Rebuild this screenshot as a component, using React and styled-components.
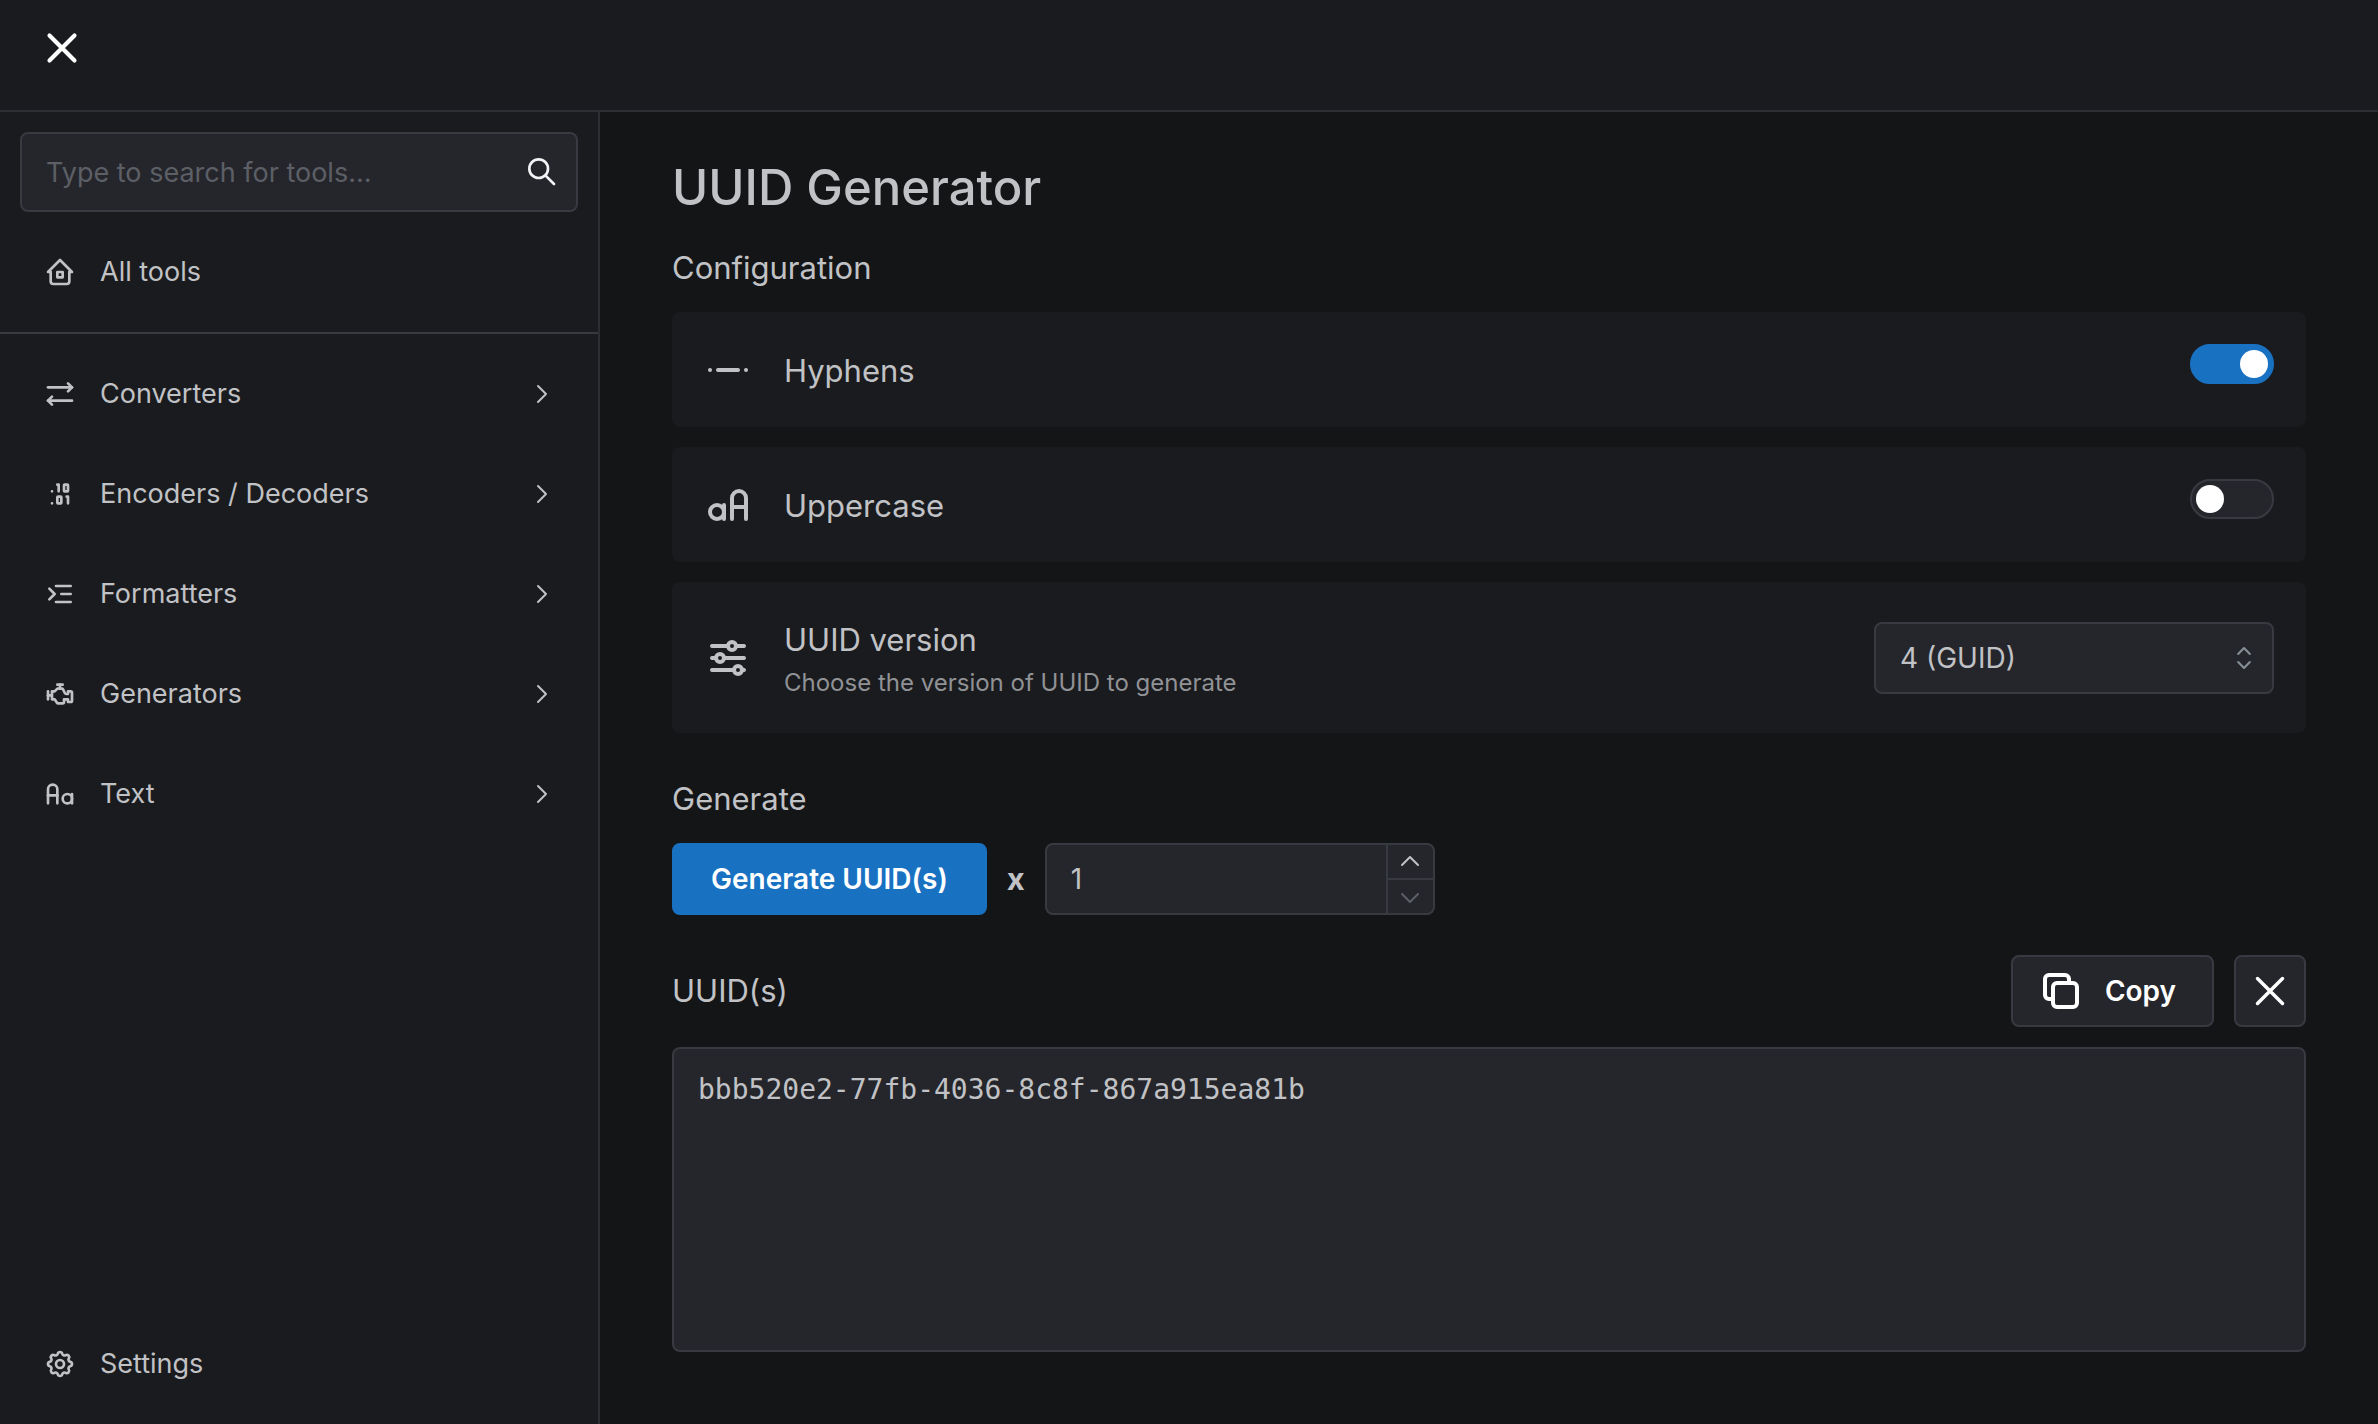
import React, { useState } from "react";
import styled, { createGlobalStyle } from "styled-components";
import {
  TbHome2,
  TbArrowsRightLeft,
  TbBinary,
  TbIndentIncrease,
  TbEngine,
  TbLetterCase,
  TbLetterCaseToggle,
  TbSettings,
  TbAdjustmentsHorizontal,
} from "react-icons/tb";

const color = {
  page: "#141517",
  panel: "#1a1b1e",
  field: "#25262b",
  line: "#2c2e33",
  border: "#373a40",
  text: "#c1c2c5",
  dimmed: "#909296",
  muted: "#5c5f66",
  blue: "#1971c2",
};

const GlobalStyle = createGlobalStyle`
  *, *::before, *::after { box-sizing: border-box; }
  body {
    margin: 0;
    background: ${color.page};
    color: ${color.text};
    font-family: Inter, Roboto, "Liberation Sans", sans-serif;
    font-size: 28px;
    line-height: 44px;
  }
  button, input, select, textarea { font: inherit; color: inherit; }
`;

const Shell = styled.div`
  min-height: 100vh;
  display: flex;
  flex-direction: column;
`;

const Header = styled.header`
  height: 112px;
  padding: 20px 34px;
  background: ${color.panel};
  border-bottom: 2px solid ${color.line};
`;

const BurgerButton = styled.button`
  display: grid;
  place-items: center;
  width: 56px;
  height: 56px;
  padding: 0;
  border: 0;
  background: none;
  color: #fff;
`;

const Body = styled.div`
  flex: 1;
  display: flex;
`;

const Sidebar = styled.nav`
  flex: none;
  display: flex;
  flex-direction: column;
  width: 600px;
  background: ${color.panel};
  border-right: 2px solid ${color.line};
  font-size: 27px;
`;

const SearchBox = styled.label`
  display: flex;
  align-items: center;
  height: 80px;
  margin: 20px 20px 10px;
  padding: 0 18px 0 24px;
  background: ${color.field};
  border: 2px solid ${color.border};
  border-radius: 8px;
  color: #f1f3f5;
`;

const SearchInput = styled.input`
  flex: 1;
  min-width: 0;
  padding: 2px 0 0;
  border: 0;
  outline: 0;
  background: none;
  &::placeholder { color: ${color.muted}; opacity: 1; }
`;

const NavLink = styled.a`
  display: flex;
  align-items: center;
  gap: 24px;
  height: 100px;
  padding: 0 44px;
  color: ${color.text};
  text-decoration: none;
`;

const NavLabel = styled.span`
  flex: 1;
`;

const TopGroup = styled.div`
  padding-bottom: 10px;
  border-bottom: 2px solid ${color.border};
`;

const NavGroup = styled.div`
  flex: 1;
  padding-top: 10px;
`;

const BottomGroup = styled.div`
  padding-bottom: 10px;
`;

const Main = styled.main`
  flex: 1;
  min-width: 0;
  padding: 40px 72px;
`;

const Title = styled.h1`
  margin: 0 0 20px;
  font-size: 49px;
  line-height: 72px;
  font-weight: 500;
`;

const Heading = styled.h2`
  margin: 0;
  font-size: 31px;
  line-height: 48px;
  font-weight: 400;
`;

const Cards = styled.div`
  display: flex;
  flex-direction: column;
  gap: 20px;
  margin: 20px 0 42px;
`;

const Card = styled.div`
  display: flex;
  align-items: center;
  gap: 32px;
  height: ${(p) => (p.$tall ? "151px" : "115px")};
  padding: 0 32px;
  border-radius: 8px;
  background: ${color.panel};
`;

const CardText = styled.div`
  flex: 1;
  display: flex;
  flex-direction: column;
  padding-top: 2px;
`;

const CardTitle = styled.label`
  font-size: 31px;
  line-height: 48px;
`;

const CardHint = styled.span`
  font-size: 24px;
  line-height: 38px;
  color: ${color.dimmed};
`;

const Switch = styled.input`
  appearance: none;
  align-self: flex-start;
  display: flex;
  align-items: center;
  width: 84px;
  height: 40px;
  margin: 32px 0 0;
  padding: 0 4px;
  border: 2px solid ${color.border};
  border-radius: 20px;
  background: ${color.field};
  &::before {
    content: "";
    width: 28px;
    height: 28px;
    border-radius: 50%;
    background: #fff;
  }
  &:checked {
    justify-content: flex-end;
    border-color: ${color.blue};
    background: ${color.blue};
  }
`;

const SelectWrap = styled.div`
  display: grid;
  align-items: center;
  width: 400px;
  > * { grid-area: 1 / 1; }
  > svg { justify-self: end; margin-right: 16px; color: #868e96; pointer-events: none; }
`;

const Select = styled.select`
  appearance: none;
  height: 72px;
  padding: 0 24px;
  border: 2px solid ${color.border};
  border-radius: 8px;
  background: ${color.field};
`;

const GenerateRow = styled.div`
  display: flex;
  align-items: center;
  gap: 20px;
  margin: 20px 0 40px;
`;

const Times = styled.span`
  font-size: 31px;
  font-weight: 700;
`;

const Button = styled.button`
  display: flex;
  align-items: center;
  justify-content: center;
  gap: 20px;
  height: 72px;
  min-width: 72px;
  padding: ${(p) => (p.$square ? "0" : p.$icon ? "0 36px 0 24px" : "0 37px")};
  border: 2px solid ${(p) => (p.$primary ? color.blue : color.border)};
  border-radius: 8px;
  background: ${(p) => (p.$primary ? color.blue : color.field)};
  color: #fff;
  font-weight: 600;
`;

const NumberBox = styled.div`
  display: flex;
  width: 390px;
  height: 72px;
  border: 2px solid ${color.border};
  border-radius: 8px;
  background: ${color.field};
`;

const NumberInput = styled.input`
  flex: 1;
  min-width: 0;
  padding: 0 24px;
  border: 0;
  outline: 0;
  background: none;
`;

const Steppers = styled.div`
  display: flex;
  flex-direction: column;
  width: 47px;
  border-left: 2px solid ${color.border};
`;

const Step = styled.button`
  flex: 1;
  display: grid;
  place-items: center;
  padding: 0;
  border: 0;
  background: none;
  color: ${color.text};
  &:first-child { border-bottom: 2px solid ${color.border}; }
  &:disabled { color: ${color.muted}; }
`;

const OutputBar = styled.div`
  display: flex;
  align-items: center;
  gap: 20px;
  margin-bottom: 20px;
  > :first-child { flex: 1; }
`;

const Output = styled.textarea`
  display: block;
  width: 100%;
  height: 305px;
  padding: 19px 24px;
  border: 2px solid ${color.border};
  border-radius: 8px;
  outline: 0;
  resize: none;
  background: ${color.field};
  font-family: "DejaVu Sans Mono", monospace;
`;

const Stroke = ({ size, width = 2, children }) => (
  <svg
    width={size}
    height={size}
    viewBox="0 0 24 24"
    fill="none"
    stroke="currentColor"
    strokeWidth={width}
    strokeLinecap="round"
    strokeLinejoin="round"
    aria-hidden="true"
  >
    {children}
  </svg>
);

const Cross = ({ width = 2.1 }) => (
  <Stroke size={40} width={width}>
    <path d="M4.5 4.500l15 15M19.500 4.500l-15 15" />
  </Stroke>
);

const Search = () => (
  <Stroke size={32}>
    <circle cx="9.500" cy="9.500" r="7" />
    <path d="M14.700 14.700L21 21" />
  </Stroke>
);

const Chevron = ({ d }) => (
  <Stroke size={24}>
    <path d={d} />
  </Stroke>
);

const Hyphen = () => (
  <Stroke size={48}>
    <path d="M7 12h10M3 12h.01M21 12h.01" />
  </Stroke>
);

const Copy = () => (
  <Stroke size={48}>
    <rect x="8" y="8" width="12" height="12" rx="2" />
    <path d="M16 8V6a2 2 0 0 0-2-2H6a2 2 0 0 0-2 2v8a2 2 0 0 0 2 2h2" />
  </Stroke>
);

const UpDown = () => (
  <Stroke size={28} width={1.8}>
    <path d="M7 8.500l5-5l5 5M7 15.500l5 5l5-5" />
  </Stroke>
);

const groups = [
  ["Converters", TbArrowsRightLeft],
  ["Encoders / Decoders", TbBinary],
  ["Formatters", TbIndentIncrease],
  ["Generators", TbEngine],
  ["Text", TbLetterCase],
];

export default function App() {
  const [hyphens, setHyphens] = useState(true);
  const [uppercase, setUppercase] = useState(false);
  const [count, setCount] = useState(1);
  const [output, setOutput] = useState("bbb520e2-77fb-4036-8c8f-867a915ea81b");

  const generate = () => {
    const lines = Array.from({ length: count }, () => {
      let id = crypto.randomUUID();
      if (!hyphens) id = id.replaceAll("-", "");
      return uppercase ? id.toUpperCase() : id;
    });
    setOutput(lines.join("\n"));
  };

  return (
    <Shell>
      <GlobalStyle />
      <Header>
        <BurgerButton aria-label="Close navigation">
          <Cross width={2.5} />
        </BurgerButton>
      </Header>
      <Body>
        <Sidebar>
          <TopGroup>
            <SearchBox>
              <SearchInput aria-label="Search tools" placeholder="Type to search for tools..." />
              <Search />
            </SearchBox>
            <NavLink href="#all">
              <TbHome2 size={32} />
              <NavLabel>All tools</NavLabel>
            </NavLink>
          </TopGroup>
          <NavGroup>
            {groups.map(([name, Icon]) => (
              <NavLink key={name} href="#group">
                <Icon size={32} />
                <NavLabel>{name}</NavLabel>
                <Chevron d="M8 4l8 8l-8 8" />
              </NavLink>
            ))}
          </NavGroup>
          <BottomGroup>
            <NavLink href="#settings">
              <TbSettings size={32} />
              <NavLabel>Settings</NavLabel>
            </NavLink>
          </BottomGroup>
        </Sidebar>
        <Main>
          <Title>UUID Generator</Title>
          <Heading>Configuration</Heading>
          <Cards>
            <Card>
              <Hyphen />
              <CardText>
                <CardTitle htmlFor="hyphens">Hyphens</CardTitle>
              </CardText>
              <Switch
                id="hyphens"
                type="checkbox"
                checked={hyphens}
                onChange={(e) => setHyphens(e.target.checked)}
              />
            </Card>
            <Card>
              <TbLetterCaseToggle size={48} />
              <CardText>
                <CardTitle htmlFor="uppercase">Uppercase</CardTitle>
              </CardText>
              <Switch
                id="uppercase"
                type="checkbox"
                checked={uppercase}
                onChange={(e) => setUppercase(e.target.checked)}
              />
            </Card>
            <Card $tall>
              <TbAdjustmentsHorizontal size={48} />
              <CardText>
                <CardTitle htmlFor="version">UUID version</CardTitle>
                <CardHint>Choose the version of UUID to generate</CardHint>
              </CardText>
              <SelectWrap>
                <Select id="version" defaultValue="4">
                  <option value="4">4 (GUID)</option>
                </Select>
                <UpDown />
              </SelectWrap>
            </Card>
          </Cards>
          <Heading>Generate</Heading>
          <GenerateRow>
            <Button $primary onClick={generate}>
              Generate UUID(s)
            </Button>
            <Times>x</Times>
            <NumberBox>
              <NumberInput
                aria-label="Number of UUIDs"
                inputMode="numeric"
                value={count}
                onChange={(e) => setCount(Math.max(1, Number(e.target.value) || 1))}
              />
              <Steppers>
                <Step aria-label="Increase" onClick={() => setCount(count + 1)}>
                  <Chevron d="M4 15l8-8l8 8" />
                </Step>
                <Step
                  aria-label="Decrease"
                  disabled={count <= 1}
                  onClick={() => setCount(count - 1)}
                >
                  <Chevron d="M4 9l8 8l8-8" />
                </Step>
              </Steppers>
            </NumberBox>
          </GenerateRow>
          <OutputBar>
            <Heading as="label" htmlFor="output">
              UUID(s)
            </Heading>
            <Button $icon onClick={() => navigator.clipboard?.writeText(output)}>
              <Copy />
              Copy
            </Button>
            <Button $square aria-label="Clear" onClick={() => setOutput("")}>
              <Cross />
            </Button>
          </OutputBar>
          <Output id="output" readOnly value={output} />
        </Main>
      </Body>
    </Shell>
  );
}
